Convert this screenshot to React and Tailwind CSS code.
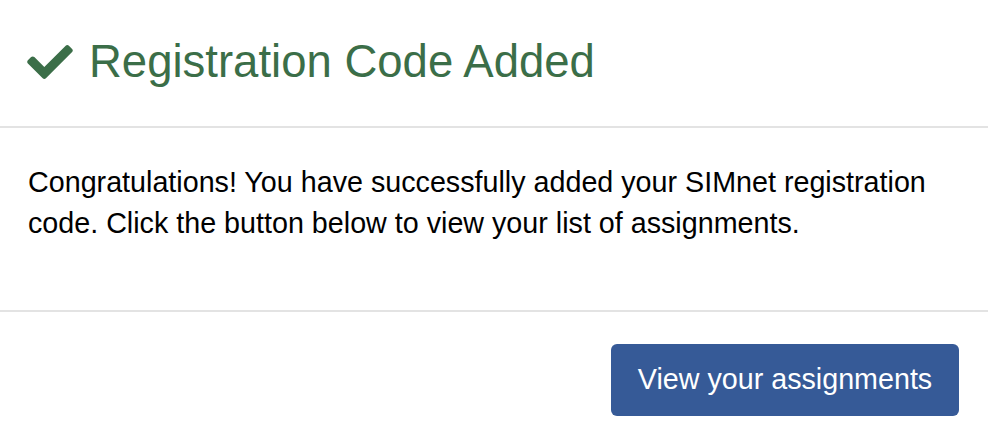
export default function App() {
  return (
    <div className="w-[988px] h-[448px] bg-white overflow-hidden" style={{ fontFamily: '"Liberation Sans", Arial, sans-serif' }}>
      <div className="h-[126px] flex items-center px-[27px] border-b-2 border-[#e3e3e3] box-content">
        <div className="flex items-center gap-[16px] text-[#3b6e48] -mt-[3px]">
          <svg width="46" height="34" viewBox="0 65 512 382" className="mt-[1px]">
            <path fill="#3b6e48" d="M173.898 439.404l-166.4-166.4c-9.997-9.997-9.997-26.206 0-36.204l36.203-36.204c9.997-9.998 26.207-9.998 36.204 0L192 312.69 432.095 72.596c9.997-9.997 26.207-9.997 36.204 0l36.203 36.204c9.997 9.997 9.997 26.206 0 36.204l-294.4 294.401c-9.998 9.997-26.207 9.997-36.204-.001z" />
          </svg>
          <h1 className="text-[45.5px] leading-[50px] font-normal">Registration Code Added</h1>
        </div>
      </div>
      <div className="h-[182px] px-[28px]">
        <p className="pt-[34px] text-[28.7px] leading-[41px] text-black w-[932px]">
          Congratulations! You have successfully added your SIMnet registration code. Click the button below to view your list of assignments.
        </p>
      </div>
      <div className="border-t-2 border-[#e3e3e3] flex justify-end pr-[29px] pt-[32px]">
        <button className="w-[348px] h-[72px] bg-[#365a97] rounded-[6px] text-white text-[28.7px]">
          View your assignments
        </button>
      </div>
    </div>
  );
}
